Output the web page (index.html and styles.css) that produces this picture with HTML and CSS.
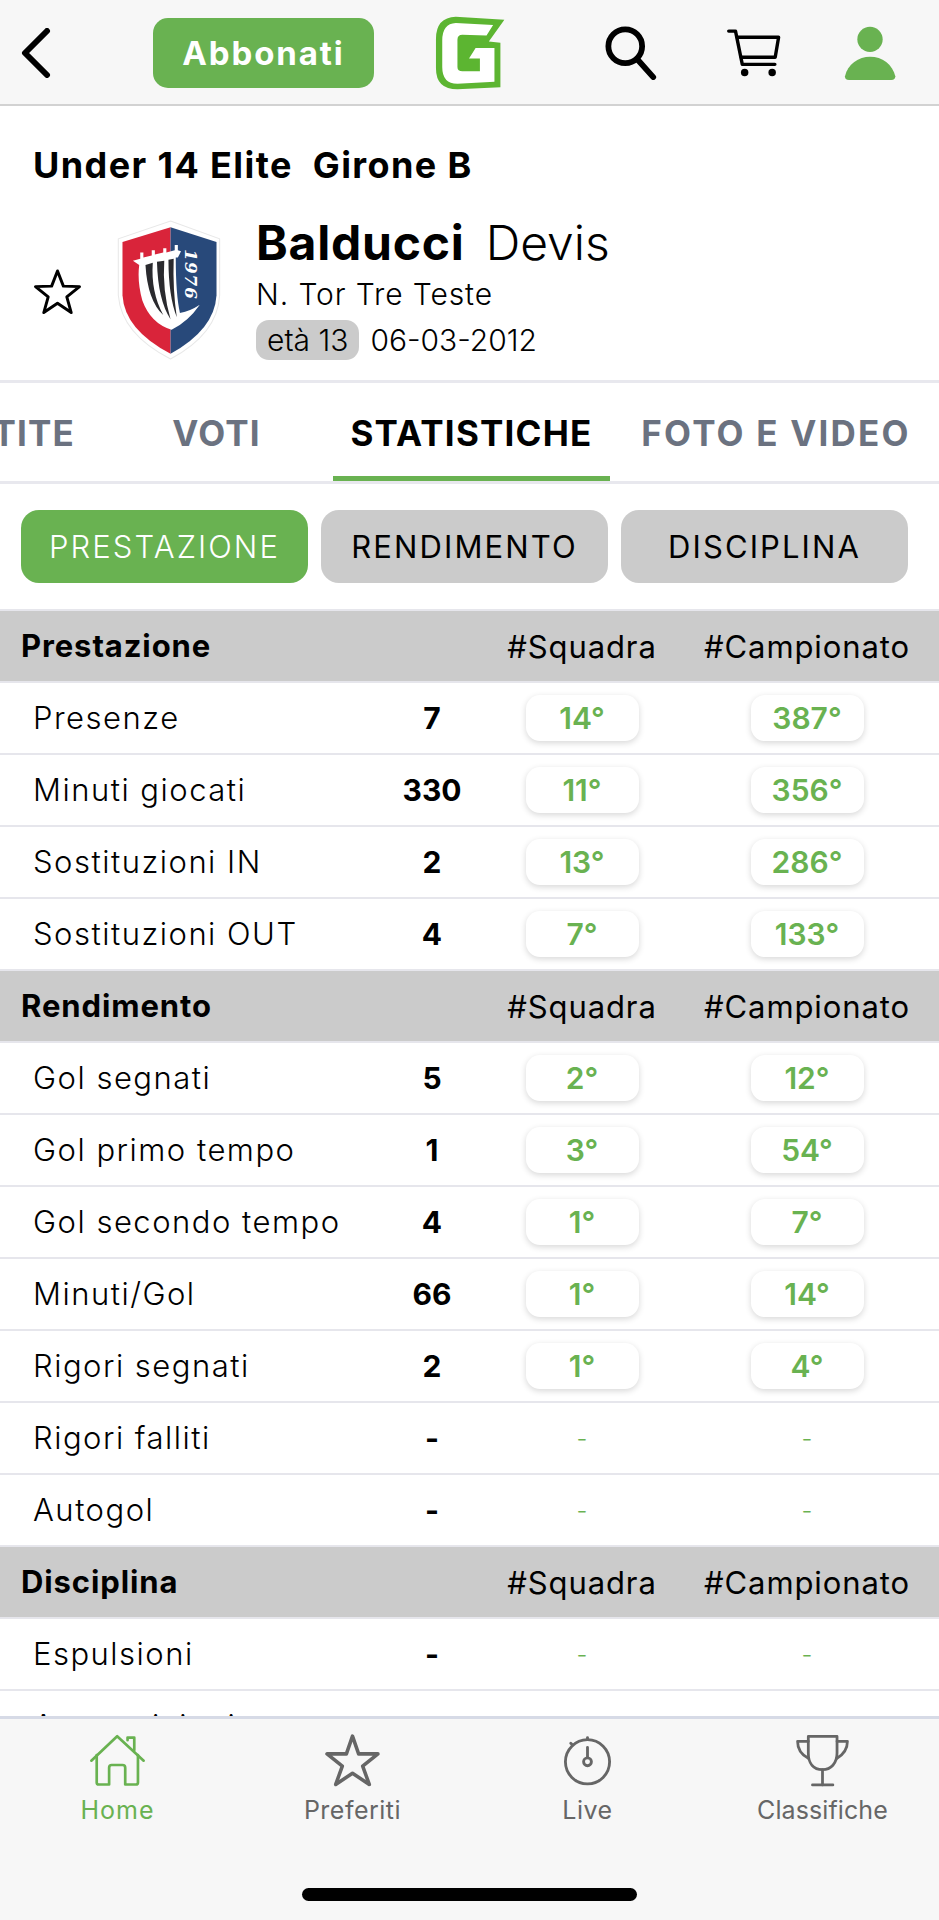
FILE: index.html
```html
<!DOCTYPE html>
<html lang="it">
<head>
<meta charset="utf-8">
<title>Balducci Devis</title>
<link rel="stylesheet" href="styles.css">
</head>
<body>
<div class="app">
  <header class="topbar">
    <svg class="ic-back" viewBox="0 0 30 50"><path d="M26 3 L4 25 L26 47"/></svg>
    <button class="subscribe">Abbonati</button>
    <svg class="ic-logo" viewBox="40 28 216 230">
      <path fill="#5cb531" d="M105 33 L252 42 L205 108 L240 112 L240 247 L110 253 Q45 253 45 190 V100 Q45 35 105 33 Z"/>
      <path fill="#fff" d="M105 52 L218 58 L198 90 L125 88 Q110 88 110 103 V185 Q110 198 125 198 H178 V160 H145 L165 128 H222 V230 L110 236 Q64 236 64 185 V105 Q64 54 105 52 Z"/>
    </svg>
    <svg class="ic-search" viewBox="0 0 56 56"><circle cx="21" cy="21" r="17.5"/><path d="M33 34 L50 53"/></svg>
    <svg class="ic-cart" viewBox="70 70 165 145"><path d="M78 78 H98 L118 176 H214"/><path d="M103 96 H225 L215 155 H115"/><circle class="dot" cx="125" cy="200" r="11"/><circle class="dot" cx="206" cy="200" r="11"/></svg>
    <svg class="ic-user" viewBox="430 58 156 168"><circle cx="508" cy="101" r="38"/><path d="M433 212 C440 175 475 153 508 153 C545 153 575 175 584 212 Q584 223 572 223 H445 Q432 223 433 212 Z"/></svg>
  </header>

  <section class="profile">
    <h1 class="league"><span>Under 14 Elite</span><span>Girone B</span></h1>
    <div class="person">
      <svg class="ic-fav" viewBox="0 0 50 48"><path d="M25 3 L31 18.500 L47.500 19 L34.500 29.500 L39 45.500 L25 36 L11 45.500 L15.500 29.500 L2.500 19 L19 18.500 Z"/></svg>
      <svg class="crest" viewBox="28 13 100 134">
        <path fill="#fff" stroke="#e8e8e8" d="M79 14 L126 31 V85 Q124 122 79 146 Q32 122 29 85 V31 Z"/>
        <path fill="#d9243a" d="M79 20 L33 34 V85 Q35 118 79 141 Z"/>
        <path fill="#28497a" d="M79 20 L123 34 V85 Q121 118 79 141 Z"/>
        <path fill="#fff" d="M43 52 L50 50 L50 44 L53 44 L53 49 L61 47 L61 42 L64 42 L64 46 L72 44 L72 40 L75 40 L75 44 L83 42 L83 37 L86 37 L86 42 L89 43 L86 49 L84 49 Q84 85 88 102 Q98 100 107 94 Q96 110 80 118 Q60 112 52 90 Q47 72 49 56 Z"/>
        <path fill="#2a2a2e" d="M55 56 L62 54 Q60 82 72 104 Q57 90 55 56 Z"/>
        <path fill="#2a2a2e" d="M66 53 L73 52 Q71 80 79 108 Q67 90 66 53 Z"/>
        <path fill="#2a2a2e" d="M77 51 L82 50 Q81 80 85 106 Q77 86 77 51 Z"/>
        <text class="crest-year" transform="translate(93 41) rotate(90)">1976</text>
      </svg>
      <div class="person-info">
        <div class="person-name"><strong>Balducci</strong><span>Devis</span></div>
        <div class="person-team">N. Tor Tre Teste</div>
        <div class="person-age"><span class="age-pill">età 13</span><span>06-03-2012</span></div>
      </div>
    </div>
  </section>

  <nav class="tabs">
    <a class="tab tab-partite">PARTITE</a>
    <a class="tab tab-voti">VOTI</a>
    <a class="tab tab-stats active">STATISTICHE</a>
    <a class="tab tab-foto">FOTO E VIDEO</a>
  </nav>

  <div class="filters">
    <button class="filter on">PRESTAZIONE</button>
    <button class="filter">RENDIMENTO</button>
    <button class="filter">DISCIPLINA</button>
  </div>

  <main class="stats">
    <div class="row head"><span class="name">Prestazione</span><span></span><span class="col">#Squadra</span><span class="col camp">#Campionato</span></div>
    <div class="row"><span class="name">Presenze</span><b class="val">7</b><span class="col"><i class="rank">14°</i></span><span class="col camp"><i class="rank">387°</i></span></div>
    <div class="row"><span class="name">Minuti giocati</span><b class="val">330</b><span class="col"><i class="rank">11°</i></span><span class="col camp"><i class="rank">356°</i></span></div>
    <div class="row"><span class="name">Sostituzioni IN</span><b class="val">2</b><span class="col"><i class="rank">13°</i></span><span class="col camp"><i class="rank">286°</i></span></div>
    <div class="row"><span class="name">Sostituzioni OUT</span><b class="val">4</b><span class="col"><i class="rank">7°</i></span><span class="col camp"><i class="rank">133°</i></span></div>

    <div class="row head"><span class="name">Rendimento</span><span></span><span class="col">#Squadra</span><span class="col camp">#Campionato</span></div>
    <div class="row"><span class="name">Gol segnati</span><b class="val">5</b><span class="col"><i class="rank">2°</i></span><span class="col camp"><i class="rank">12°</i></span></div>
    <div class="row"><span class="name">Gol primo tempo</span><b class="val">1</b><span class="col"><i class="rank">3°</i></span><span class="col camp"><i class="rank">54°</i></span></div>
    <div class="row"><span class="name">Gol secondo tempo</span><b class="val">4</b><span class="col"><i class="rank">1°</i></span><span class="col camp"><i class="rank">7°</i></span></div>
    <div class="row"><span class="name">Minuti/Gol</span><b class="val">66</b><span class="col"><i class="rank">1°</i></span><span class="col camp"><i class="rank">14°</i></span></div>
    <div class="row"><span class="name">Rigori segnati</span><b class="val">2</b><span class="col"><i class="rank">1°</i></span><span class="col camp"><i class="rank">4°</i></span></div>
    <div class="row"><span class="name">Rigori falliti</span><b class="val">-</b><span class="col nil">-</span><span class="col camp nil">-</span></div>
    <div class="row"><span class="name">Autogol</span><b class="val">-</b><span class="col nil">-</span><span class="col camp nil">-</span></div>

    <div class="row head"><span class="name">Disciplina</span><span></span><span class="col">#Squadra</span><span class="col camp">#Campionato</span></div>
    <div class="row"><span class="name">Espulsioni</span><b class="val">-</b><span class="col nil">-</span><span class="col camp nil">-</span></div>
    <div class="row"><span class="name">Ammonizioni</span><b class="val">-</b><span class="col nil">-</span><span class="col camp nil">-</span></div>
  </main>

  <footer class="bottom">
    <div class="nav">
      <a class="nav-item current">
        <svg class="nav-ic" viewBox="270 125 170 160"><path d="M277 207 L354 134 L433 207"/><path d="M385 146 V138 H405 V176"/><path d="M293 190 V272 Q293 278 299 278 H330 V228 Q330 220 338 220 H370 Q378 220 378 228 V278 H410 Q416 278 416 272 V190"/></svg>
        <span>Home</span>
      </a>
      <a class="nav-item">
        <svg class="nav-ic" viewBox="0 0 56 52"><path d="M28 2.500 L34 20 L53 20 L38 32 L44.500 50 L28 39 L11.500 50 L18 32 L3 20 L22 20 Z"/></svg>
        <span>Preferiti</span>
      </a>
      <a class="nav-item">
        <svg class="nav-ic" viewBox="95 25 160 150"><circle cx="175" cy="105" r="62"/><path d="M175 65 V92"/><circle cx="175" cy="105" r="11"/><path class="knob" d="M175 37 V41 M128 53 L131 56"/></svg>
        <span>Live</span>
      </a>
      <a class="nav-item nav-tight">
        <svg class="nav-ic" viewBox="795 22 162 156"><path d="M835 32 H918 V80 C918 110 900 128 876 128 C850 128 835 110 835 80 Z"/><path d="M835 46 H804 C804 70 815 85 835 95"/><path d="M918 46 H948 C948 70 935 85 918 95"/><path d="M876 128 V172"/><path d="M847 172 H906"/></svg>
        <span>Classifiche</span>
      </a>
    </div>
    <div class="home-bar"></div>
  </footer>
</div>
</body>
</html>
```

FILE: styles.css
```css
* { box-sizing: border-box; }
html, body { margin: 0; padding: 0; height: 100%; overflow: hidden; background: #fff; }
body { font-family: Inter, "Open Sans", sans-serif; color: #000; }
.app { width: 939px; height: 1920px; display: flex; flex-direction: column; overflow: hidden; }

/* top bar */
.topbar { height: 106px; flex: none; display: flex; align-items: center; padding-top: 2px; background: #f7f7f7; border-bottom: 2px solid #d2d2d2; }
.topbar svg { flex: none; }
.ic-back { width: 30px; height: 50px; margin-left: 21px; fill: none; stroke: #000; stroke-width: 6; stroke-linecap: round; stroke-linejoin: round; }
.subscribe { width: 221px; height: 70px; margin-left: 102px; border: 0; border-radius: 15px; background: #69b251; color: #fff; font: 700 33px Inter, sans-serif; letter-spacing: 1.900px; }
.ic-logo { width: 72px; height: 76px; margin-left: 60px; }
.ic-search { width: 54px; height: 54px; margin-left: 99px; fill: none; stroke: #000; stroke-width: 6; stroke-linecap: round; }
.ic-cart { width: 56px; height: 50px; margin-left: 67px; fill: none; stroke: #000; stroke-width: 10; stroke-linecap: round; stroke-linejoin: round; }
.ic-cart .dot { fill: #000; stroke: none; }
.ic-user { width: 52px; height: 56px; margin-left: 62px; fill: #69b251; }

/* profile */
.profile { height: 277px; flex: none; padding: 39px 0 0 33px; border-bottom: 3px solid #e8e8ee; }
.league { display: flex; gap: 20px; margin: 0; font-size: 36px; line-height: 40px; font-weight: 700; letter-spacing: 1.400px; }
.person { display: flex; align-items: center; margin-top: 31px; }
.ic-fav { width: 49px; height: 47px; margin-top: 6px; flex: none; fill: none; stroke: #000; stroke-width: 3; stroke-linejoin: round; }
.crest { width: 109px; height: 140px; margin: 4px 0 0 33px; flex: none; }
.crest-year { font: italic 700 16px "DejaVu Serif", serif; fill: #fff; letter-spacing: 1px; }
.person-info { margin-left: 32px; }
.person-name { display: flex; align-items: baseline; gap: 21px; font-size: 48px; line-height: 54px; }
.person-name strong { font-weight: 700; letter-spacing: .8px; }
.person-name span { font-weight: 300; }
.person-team { font-size: 30px; line-height: 36px; font-weight: 300; margin-top: 6px; letter-spacing: .9px; }
.person-age { display: flex; align-items: center; gap: 11px; font-size: 30px; font-weight: 300; margin-top: 8px; }
.age-pill { height: 40px; padding: 0 11px; line-height: 40px; border-radius: 13px; background: #cbcbcb; }

/* tabs */
.tabs { height: 101px; flex: none; display: flex; overflow: hidden; border-bottom: 3px solid #e8e8ee; font-size: 35px; font-weight: 700; color: #6b7280; letter-spacing: 1.200px; }
.tab { flex: none; height: 98px; display: flex; align-items: center; justify-content: center; padding-top: 6px; border-bottom: 5px solid transparent; }
.tab-partite { width: 100px; justify-content: flex-end; padding-right: 25px; white-space: nowrap; }
.tab-voti { width: 233px; }
.tab-stats { width: 277px; }
.tab-foto { width: 332px; letter-spacing: 2.200px; }
.tab.active { color: #000; border-bottom-color: #69b251; }

/* filters */
.filters { height: 125px; flex: none; display: flex; gap: 13px; padding: 26px 0 0 21px; }
.filter { width: 287px; height: 73px; padding-bottom: 2px; border: 0; border-radius: 18px; background: #cbcbcb; color: #000; font: 400 31px Inter, sans-serif; letter-spacing: 2.100px; }
.filter.on { background: #69b251; color: #fff; font-weight: 300; }

/* table */
.stats { flex: 1; min-height: 0; overflow: hidden; }
.row { display: grid; grid-template-columns: 372px 120px 180px 1fr; align-items: center; height: 72px; border-top: 2px solid #e6e6ec; font-size: 31px; font-weight: 300; }
.row .name { padding: 0 0 2px 33px; white-space: nowrap; letter-spacing: 1.500px; }
.row.head { background: #cbcbcb; font-weight: 400; }
.row.head .name { padding-left: 21px; font-weight: 700; letter-spacing: .9px; }
.row.head .col { letter-spacing: .9px; }
.val { text-align: center; font-weight: 700; font-size: 30px; }
.col { text-align: center; white-space: nowrap; }
.camp { padding-left: 3px; }
.rank { display: inline-block; width: 113px; height: 46px; line-height: 46px; border-radius: 14px; background: #fff; color: #69b251; font-size: 30px; font-style: normal; font-weight: 600; box-shadow: 0 2px 6px rgba(0,0,0,.16); }
.nil { color: #69b251; font-size: 24px; }

/* bottom nav */
.bottom { height: 204px; flex: none; display: flex; flex-direction: column; background: #f7f7f7; border-top: 3px solid #d6dae6; }
.nav { display: grid; grid-template-columns: repeat(4, 235px); }
.nav-item { display: flex; flex-direction: column; align-items: center; padding-top: 14px; color: #666; font-size: 25px; font-weight: 400; letter-spacing: .5px; }
.nav-item span { margin-top: 8px; line-height: 30px; }
.nav-item.current { color: #69b251; letter-spacing: 1px; }
.nav-item.nav-tight { letter-spacing: .1px; }
.nav-ic { width: 57px; height: 54px; fill: none; stroke: #666; stroke-width: 8; stroke-linecap: round; stroke-linejoin: round; }
.nav-item:nth-child(2) .nav-ic { stroke-width: 3.500; }
.current .nav-ic { stroke: #69b251; }
.home-bar { width: 335px; height: 13px; margin: auto auto 19px; border-radius: 7px; background: #000; }
```
